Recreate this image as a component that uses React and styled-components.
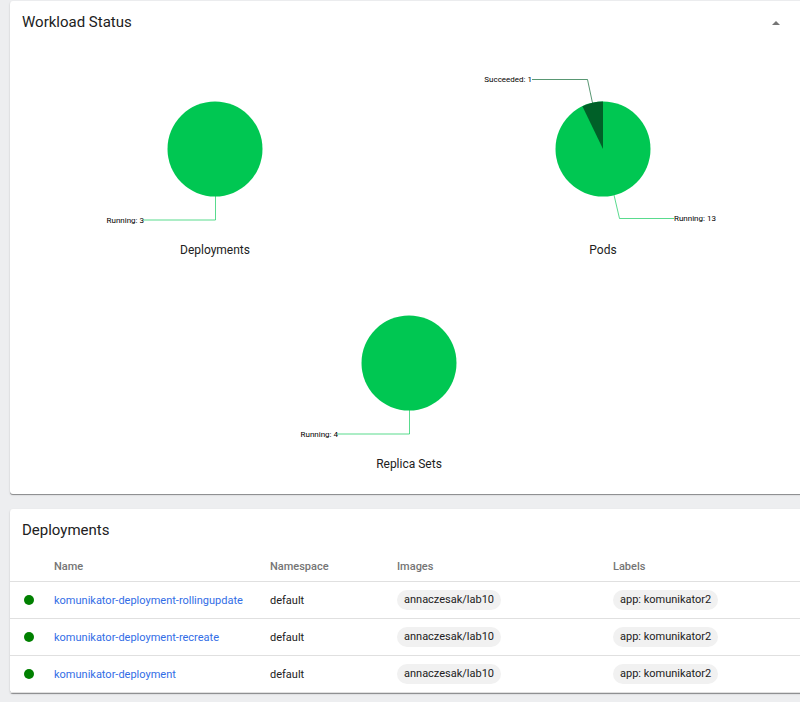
import React from "react";
import styled, { createGlobalStyle } from "styled-components";

const GlobalStyle = createGlobalStyle`
  body {
    margin: 0;
    background: #edeef0;
    color: #212121;
    font-family: Roboto, "Liberation Sans", sans-serif;
    font-size: 11px;
    overflow-x: hidden;
  }
`;

const Page = styled.main`
  display: flex;
  flex-direction: column;
  gap: 15px;
  padding: 1px 0 9px 10px;
  margin-right: -8px;
`;

const Card = styled.section`
  background: #fff;
  border-radius: 3px;
  box-shadow: 0 1px 0 #8f9092, 0 1px 2px rgba(0, 0, 0, 0.2);
`;

const CardHeader = styled.header`
  display: flex;
  align-items: center;
  justify-content: space-between;
  height: 42px;
  padding: 0 24px 0 12px;
`;

const CardTitle = styled.h2`
  margin: 0;
  font-size: 15px;
  line-height: 20px;
  font-weight: 400;
`;

const CollapseButton = styled.button`
  display: flex;
  align-items: flex-end;
  justify-content: center;
  width: 16px;
  height: 16px;
  padding: 0 0 5px;
  border: 0;
  background: transparent;
  color: #757575;
  cursor: pointer;
`;

const ChartGrid = styled.div`
  display: flex;
  flex-wrap: wrap;
  justify-content: center;
  padding: 0 11px 23px;
`;

const ChartCell = styled.figure`
  display: flex;
  flex-direction: column;
  align-items: center;
  flex: 0 0 50%;
  margin: 0;
`;

const ChartTitle = styled.figcaption`
  font-size: 12px;
  line-height: 14px;
`;

const ChartSvg = styled.svg`
  display: block;
  overflow: visible;
`;

const SliceLabel = styled.text`
  fill: #000;
  font-size: 8px;
`;

const Leader = styled.polyline`
  fill: none;
  stroke: ${(p) => p.$color};
  stroke-width: 1;
  opacity: 0.65;
`;

const Table = styled.table`
  width: 100%;
  table-layout: fixed;
  border-collapse: separate;
  border-spacing: 0;
`;

const Column = styled.col`
  width: ${(p) => (p.$width ? `${p.$width}px` : "auto")};
`;

const HeadCell = styled.th`
  box-sizing: border-box;
  height: 31px;
  padding: 0;
  border-bottom: 1px solid #e0e0e0;
  color: #757575;
  font-size: 11px;
  font-weight: 500;
  text-align: left;
`;

const Cell = styled.td`
  box-sizing: border-box;
  height: 37px;
  padding: 0;
  border-bottom: 1px solid #e0e0e0;
  white-space: nowrap;
`;

const StatusDot = styled.svg`
  display: block;
  margin-left: 14px;
`;

const NameLink = styled.a`
  color: #326de6;
  text-decoration: none;
`;

const Chip = styled.span`
  display: inline-block;
  padding: 0 7px;
  border-radius: 10px;
  background: #f1f1f1;
  line-height: 20px;
  vertical-align: middle;
`;

const RUNNING = "#00c752";
const SUCCEEDED = "#006028";

const charts = [
  {
    title: "Deployments",
    labels: [{ text: "Running: 3", x: 59, y: 180, anchor: "end", color: RUNNING, points: "58,177 130.5,177 130.5,153" }],
  },
  {
    title: "Pods",
    slice: "M130 106V58.5A47.5 47.5 0 0 0 109.4 63.2Z",
    labels: [
      { text: "Succeeded: 1", x: 59, y: 39, anchor: "end", color: SUCCEEDED, points: "59,36.5 114.5,36.5 119.5,60" },
      { text: "Running: 13", x: 201, y: 178, anchor: "start", color: RUNNING, points: "201,175.5 146.5,175.5 141,152" },
    ],
  },
  {
    title: "Replica Sets",
    labels: [{ text: "Running: 4", x: 59, y: 180, anchor: "end", color: RUNNING, points: "58,177 130.5,177 130.5,153" }],
  },
];

const deployments = [
  "komunikator-deployment-rollingupdate",
  "komunikator-deployment-recreate",
  "komunikator-deployment",
].map((name) => ({ name, namespace: "default", image: "annaczesak/lab10", label: "app: komunikator2" }));

function StatusChart({ title, slice, labels }) {
  return (
    <ChartCell>
      <ChartSvg width="260" height="200" viewBox="0 0 260 200" role="img" aria-label={title}>
        <circle cx="130" cy="106" r="47.5" fill={RUNNING} />
        {slice && <path d={slice} fill={SUCCEEDED} />}
        {labels.map((l) => (
          <g key={l.text}>
            <SliceLabel x={l.x} y={l.y} textAnchor={l.anchor}>{l.text}</SliceLabel>
            <Leader points={l.points} $color={l.color} />
          </g>
        ))}
      </ChartSvg>
      <ChartTitle>{title}</ChartTitle>
    </ChartCell>
  );
}

export default function App() {
  return (
    <>
      <GlobalStyle />
      <Page>
        <Card>
          <CardHeader>
            <CardTitle>Workload Status</CardTitle>
            <CollapseButton type="button" aria-label="Collapse">
              <svg width="8" height="4" viewBox="0 0 8 4" aria-hidden="true">
                <path d="M0 4 4 0 8 4Z" fill="currentColor" />
              </svg>
            </CollapseButton>
          </CardHeader>
          <ChartGrid>
            {charts.map((chart) => (
              <StatusChart key={chart.title} {...chart} />
            ))}
          </ChartGrid>
        </Card>
        <Card>
          <CardHeader>
            <CardTitle>Deployments</CardTitle>
          </CardHeader>
          <Table>
            <colgroup>
              <Column $width={44} />
              <Column $width={216} />
              <Column $width={127} />
              <Column $width={216} />
              <Column />
            </colgroup>
            <thead>
              <tr>
                <HeadCell aria-label="Status" />
                <HeadCell scope="col">Name</HeadCell>
                <HeadCell scope="col">Namespace</HeadCell>
                <HeadCell scope="col">Images</HeadCell>
                <HeadCell scope="col">Labels</HeadCell>
              </tr>
            </thead>
            <tbody>
              {deployments.map((d) => (
                <tr key={d.name}>
                  <Cell>
                    <StatusDot width="10" height="10" viewBox="0 0 10 10" role="img" aria-label="Running">
                      <circle cx="5" cy="5" r="5" fill="#008000" />
                    </StatusDot>
                  </Cell>
                  <Cell><NameLink href="#">{d.name}</NameLink></Cell>
                  <Cell>{d.namespace}</Cell>
                  <Cell><Chip>{d.image}</Chip></Cell>
                  <Cell><Chip>{d.label}</Chip></Cell>
                </tr>
              ))}
            </tbody>
          </Table>
        </Card>
      </Page>
    </>
  );
}
